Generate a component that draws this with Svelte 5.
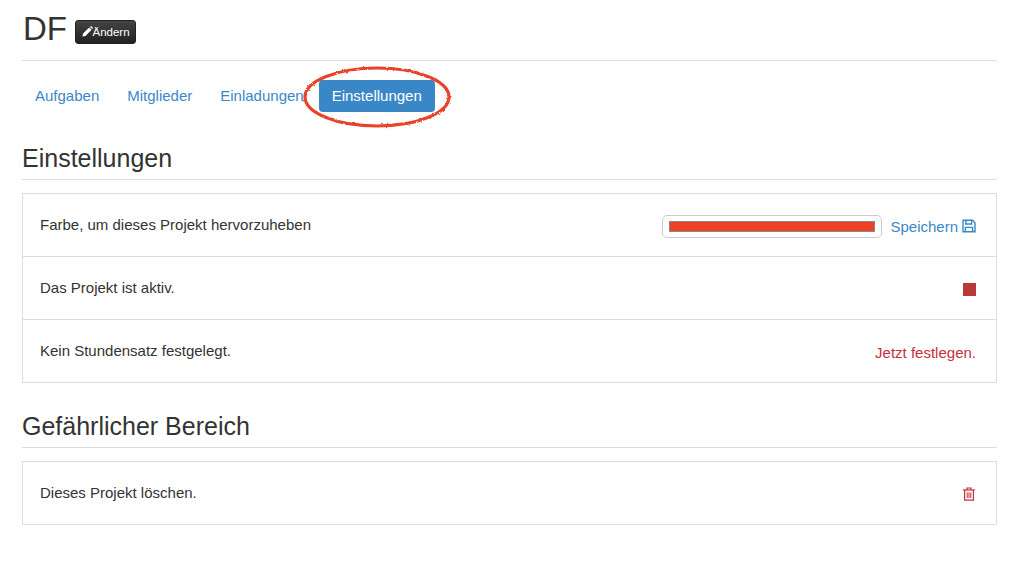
<script>
  const tabs = ['Aufgaben', 'Mitglieder', 'Einladungen']
</script>

<main>
  <header class="title">
    <h1>DF</h1>
    <button class="edit">
      <svg width="11" height="11" viewBox="0 0 12 12"><path d="M0.5 11.5 L1.2 8.2 L7.8 1.6 L10.4 4.2 L3.8 10.8 Z M8.6 0.8 L9.4 0.3 Q9.9 0 10.3 0.4 L11.6 1.7 Q12 2.1 11.7 2.6 L11.2 3.4 Z" fill="#fff"/></svg>Ändern
    </button>
  </header>

  <nav>
    {#each tabs as tab}
      <a href="#top">{tab}</a>
    {/each}
    <a href="#top" class="active">Einstellungen</a>
    <svg class="oval" width="156" height="70" viewBox="0 0 156 70">
      <defs>
        <filter id="rough" x="-5%" y="-10%" width="110%" height="120%">
          <feTurbulence type="fractalNoise" baseFrequency="0.3" numOctaves="2" seed="4"/>
          <feDisplacementMap in="SourceGraphic" scale="2.5"/>
          <feGaussianBlur stdDeviation="0.4"/>
        </filter>
      </defs>
      <ellipse cx="78" cy="35" rx="72" ry="29" fill="none" stroke="#e8432a" stroke-width="3.2" filter="url(#rough)"/>
    </svg>
  </nav>

  <h2>Einstellungen</h2>
  <section class="list">
    <div class="row">
      <span>Farbe, um dieses Projekt hervorzuheben</span>
      <span class="right">
        <span class="color"><span class="swatch"></span></span>
        <a href="#top" class="save">Speichern
          <svg width="14" height="14" viewBox="0 0 14 14" fill="none" stroke="#3a87c8" stroke-width="1.4"><path d="M1 1.2 H10.5 L13 3.7 V12.8 H1 Z"/><path d="M3.8 1.2 V5 H9.6 V1.2"/><path d="M3.4 12.8 V8.4 H10.6 V12.8"/></svg>
        </a>
      </span>
    </div>
    <div class="row">
      <span>Das Projekt ist aktiv.</span>
      <span class="stop"></span>
    </div>
    <div class="row">
      <span>Kein Stundensatz festgelegt.</span>
      <a href="#top" class="danger">Jetzt festlegen.</a>
    </div>
  </section>

  <h2 class="second">Gefährlicher Bereich</h2>
  <section class="list">
    <div class="row">
      <span>Dieses Projekt löschen.</span>
      <svg class="trash" width="12" height="14" viewBox="0 0 12 14" fill="none" stroke="#c5303c" stroke-width="1.2"><path d="M0 3 H12"/><path d="M4 3 V1 H8 V3"/><path d="M1.6 3 V13.2 H10.4 V3"/><path d="M4.2 5.4 V11 M6 5.4 V11 M7.8 5.4 V11" stroke-width="1"/></svg>
    </div>
  </section>
</main>

<style>
  :global(body) {
    background: #fff;
    font-family: "Liberation Sans", Arial, sans-serif;
    color: #333;
  }

  main {
    width: 975px;
    margin-left: 22px;
    font-size: 15px;
  }

  .title {
    display: flex;
    align-items: center;
    gap: 8px;
    height: 58px;
    padding-bottom: 2px;
    border-bottom: 1px solid #ddd;
  }

  h1 {
    margin: 0;
    padding-left: 1px;
    font-size: 33px;
    font-weight: 400;
    line-height: 58px;
  }

  .edit {
    display: flex;
    align-items: center;
    height: 24px;
    margin-top: 5px;
    padding: 0 5.5px;
    border: 1px solid #222;
    border-radius: 3px;
    background: linear-gradient(#444, #222);
    color: #fff;
    font: 11.5px "Liberation Sans", Arial, sans-serif;
  }

  nav {
    position: relative;
    display: flex;
    margin-top: 19px;
    height: 32px;
  }

  nav a {
    padding: 0 13px;
    margin-right: 2px;
    line-height: 32px;
    color: #3a87c8;
    text-decoration: none;
    border-radius: 4px;
  }

  nav a.active {
    background: #3a87c8;
    color: #fff;
  }

  .oval {
    position: absolute;
    left: 277px;
    top: -18px;
  }

  h2 {
    margin: 32px 0 13px;
    padding-bottom: 7px;
    font-size: 25px;
    font-weight: 400;
    line-height: 28px;
    border-bottom: 1px solid #ddd;
  }

  h2.second {
    margin-top: 29px;
  }

  .list {
    border: 1px solid #ddd;
  }

  .row {
    display: flex;
    align-items: center;
    justify-content: space-between;
    height: 60px;
    padding: 0 20px 2px 17px;
    border-bottom: 1px solid #ddd;
  }

  .row:last-child {
    border-bottom: 0;
  }

  .right {
    display: flex;
    align-items: center;
    gap: 8px;
    margin-top: 4px;
  }

  .color {
    display: block;
    width: 206px;
    padding: 5px 6px;
    border: 1px solid #ccc;
    border-radius: 5px;
  }

  .swatch {
    display: block;
    height: 9px;
    background: #ec4125;
    border: 1px solid #888;
  }

  .save {
    display: flex;
    align-items: center;
    gap: 4px;
    color: #3a87c8;
    text-decoration: none;
  }

  .stop {
    width: 13px;
    height: 13px;
    margin-top: 4px;
    background: #b93838;
  }

  .danger {
    margin-top: 4px;
    color: #c5303c;
    text-decoration: none;
  }

  .trash {
    margin-top: 4px;
    margin-right: 1px;
  }
</style>
